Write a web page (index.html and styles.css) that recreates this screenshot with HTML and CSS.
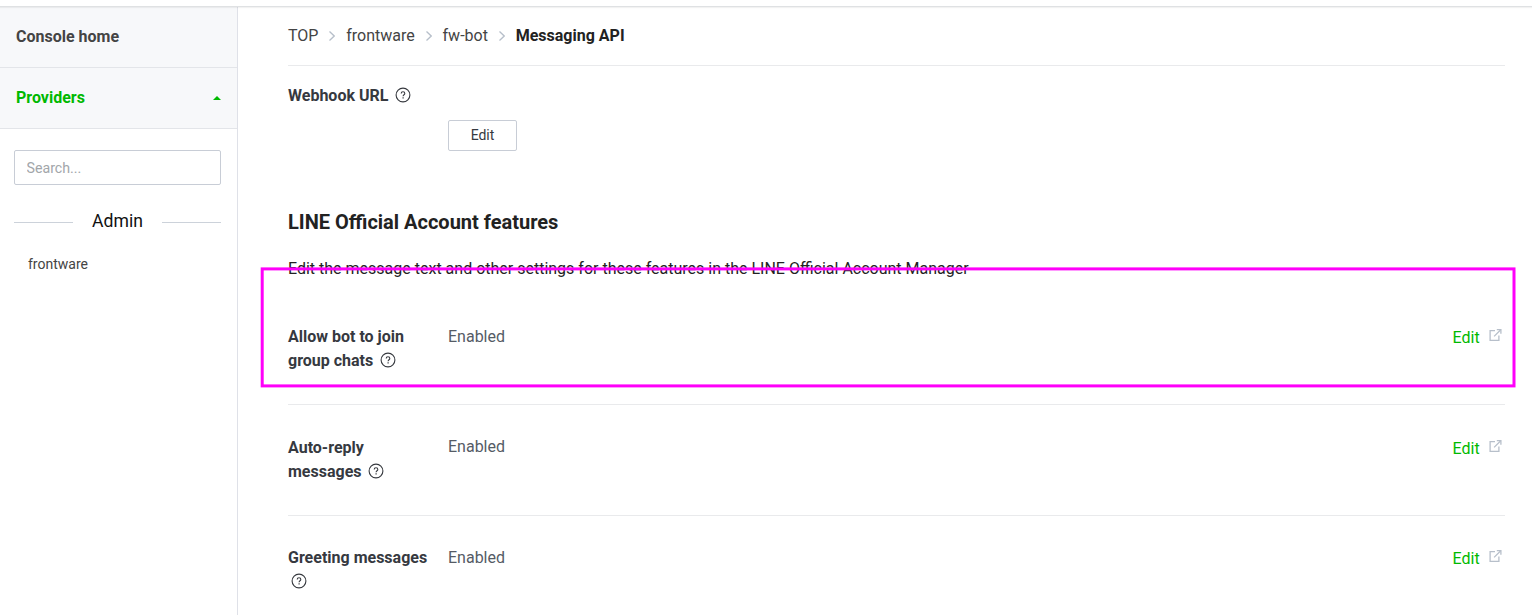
FILE: index.html
```html
<!DOCTYPE html>
<html lang="en">
<head>
<meta charset="utf-8">
<title>Messaging API</title>
<link rel="stylesheet" href="styles.css">
</head>
<body>
<svg class="defs" aria-hidden="true">
  <symbol id="help" viewBox="0 0 16 16">
    <circle cx="8" cy="8" r="6.9" fill="none" stroke="currentColor" stroke-width="1.1"/>
    <path d="M6.2 6.5C6.2 5.4 6.9 4.8 8 4.8s1.8.7 1.8 1.6c0 1.4-1.7 1.3-1.7 2.8" fill="none" stroke="currentColor" stroke-width="1.1"/>
    <path d="M7.5 10.2h1.2v1.3H7.5z" fill="currentColor"/>
  </symbol>
  <symbol id="external" viewBox="0 0 12 12">
    <path d="M5.5 1.6H.6v9.8h8.8V6.5M4.6 7.4L11 1" fill="none" stroke="currentColor" stroke-width="1.3"/>
    <path d="M7.3.6h4.1v4.1" fill="none" stroke="currentColor" stroke-width="1.3"/>
  </symbol>
  <symbol id="chevron" viewBox="0 0 6 10">
    <path d="M.5.5L5.2 5 .5 9.5" fill="none" stroke="currentColor" stroke-width="1.3"/>
  </symbol>
</svg>
<header class="topbar"></header>
<div class="layout">
  <aside class="sidebar">
    <a class="nav-item">Console home</a>
    <a class="nav-item active">Providers <span class="caret"></span></a>
    <div class="provider-panel">
      <input class="search" type="text" placeholder="Search...">
      <div class="divider">Admin</div>
      <a class="provider">frontware</a>
    </div>
  </aside>
  <main class="content">
    <nav class="breadcrumb">
      <span>TOP</span><svg class="chevron"><use href="#chevron"/></svg>
      <span>frontware</span><svg class="chevron"><use href="#chevron"/></svg>
      <span>fw-bot</span><svg class="chevron"><use href="#chevron"/></svg>
      <strong>Messaging API</strong>
    </nav>
    <section class="webhook">
      <div class="label">Webhook URL <svg class="help"><use href="#help"/></svg></div>
      <button class="button">Edit</button>
    </section>
    <h2 class="heading">LINE Official Account features</h2>
    <p class="description">Edit the message text and other settings for these features in the LINE Official Account Manager</p>
    <section class="row first">
      <div class="label">Allow bot to join group chats <svg class="help"><use href="#help"/></svg></div>
      <div class="value">Enabled</div>
      <a class="edit">Edit<svg class="external"><use href="#external"/></svg></a>
    </section>
    <section class="row middle">
      <div class="label">Auto-reply messages <svg class="help"><use href="#help"/></svg></div>
      <div class="value">Enabled</div>
      <a class="edit">Edit<svg class="external"><use href="#external"/></svg></a>
    </section>
    <section class="row">
      <div class="label">Greeting messages <svg class="help"><use href="#help"/></svg></div>
      <div class="value">Enabled</div>
      <a class="edit">Edit<svg class="external"><use href="#external"/></svg></a>
    </section>
  </main>
</div>
<svg class="highlight"><rect x="2.2" y="2.9" width="1251.8" height="117" fill="none" stroke="#ff00fa" stroke-width="3"/></svg>
</body>
</html>
```

FILE: styles.css
```css
* { box-sizing: border-box; }
body {
  margin: 0;
  height: 615px;
  overflow: hidden;
  background: #fff;
  color: #222;
  font: 16px/24px Roboto, sans-serif;
  display: flex;
  flex-direction: column;
}
.defs { display: none; }
.topbar {
  flex: none;
  height: 7px;
  border-bottom: 1px solid #dfe1e3;
  box-shadow: 0 1px 1px rgba(0, 0, 0, .05);
  position: relative;
}
.layout { flex: 1; min-height: 0; display: flex; }
.sidebar { width: 238px; flex: none; border-right: 1px solid #dfe1e8; }
.nav-item {
  display: flex;
  align-items: center;
  justify-content: space-between;
  height: 61px;
  padding: 0 16px;
  background: #f7f8fa;
  border-bottom: 1px solid #e3e5e9;
  color: #444;
  font-weight: 700;
  line-height: 20px;
}
.active { color: #00b900; }
.caret {
  border: 4px solid transparent;
  border-top: 0;
  border-bottom: 4px solid #00b900;
}
.provider-panel { padding: 21px 16px 0 14px; }
.search {
  display: block;
  width: 100%;
  height: 35px;
  padding: 0 11.5px;
  border: 1px solid #c8cdd6;
  border-radius: 2px;
  font: 14.2px Roboto, sans-serif;
}
.search::placeholder { color: #a2a6aa; }
.divider {
  display: flex;
  align-items: center;
  gap: 19px;
  margin-top: 24px;
  color: #111;
  font-size: 17.6px;
}
.divider::before, .divider::after {
  content: "";
  flex: 1;
  height: 1px;
  margin-top: 2px;
  background: #ccd2da;
}
.provider { display: block; margin: 19px 0 0 14px; font-size: 14px; color: #444; }
.content { flex: 1; padding: 0 27px 0 50px; }
.breadcrumb {
  display: flex;
  align-items: center;
  height: 59px;
  border-bottom: 1px solid #e9eaec;
  color: #444;
}
.breadcrumb strong { color: #222; }
.chevron { width: 6px; height: 10px; margin: 0 10.8px 1px 11px; color: #b7bfca; }
.webhook { padding-top: 18px; height: 140px; }
.label { width: 160px; padding-right: 20px; color: #36393f; font-weight: 700; }
.webhook .label { width: auto; }
.help { width: 16px; height: 16px; margin: 0 0 0 2.5px; vertical-align: -2px; }
.button {
  display: block;
  width: 69px;
  height: 31px;
  margin: 12px 0 0 160px;
  padding: 0 0 2px;
  border: 1px solid #c8cdd6;
  border-radius: 2px;
  background: #fff;
  color: #36393f;
  font: 14px Roboto, sans-serif;
}
.heading { margin: 0; padding-top: 1px; font-size: 20px; line-height: 30px; }
.description { margin: 20px 0 0; }
.row { display: flex; height: 111px; padding-top: 30px; border-bottom: 1px solid #e9eaec; }
.row.first { height: 124px; padding-top: 44px; }
.row.middle { padding-top: 31px; }
.middle .value { margin-top: -1px; }
.value { flex: 1; color: #555b65; }
.edit { display: flex; padding: 1px 3.4px 0 0; color: #00b900; }
.external { width: 13px; height: 12px; margin: 3px 0 0 9px; color: #b7bfca; }
.highlight {
  position: absolute;
  left: 260px;
  top: 266px;
  width: 1256px;
  height: 123px;
  pointer-events: none;
}
```
